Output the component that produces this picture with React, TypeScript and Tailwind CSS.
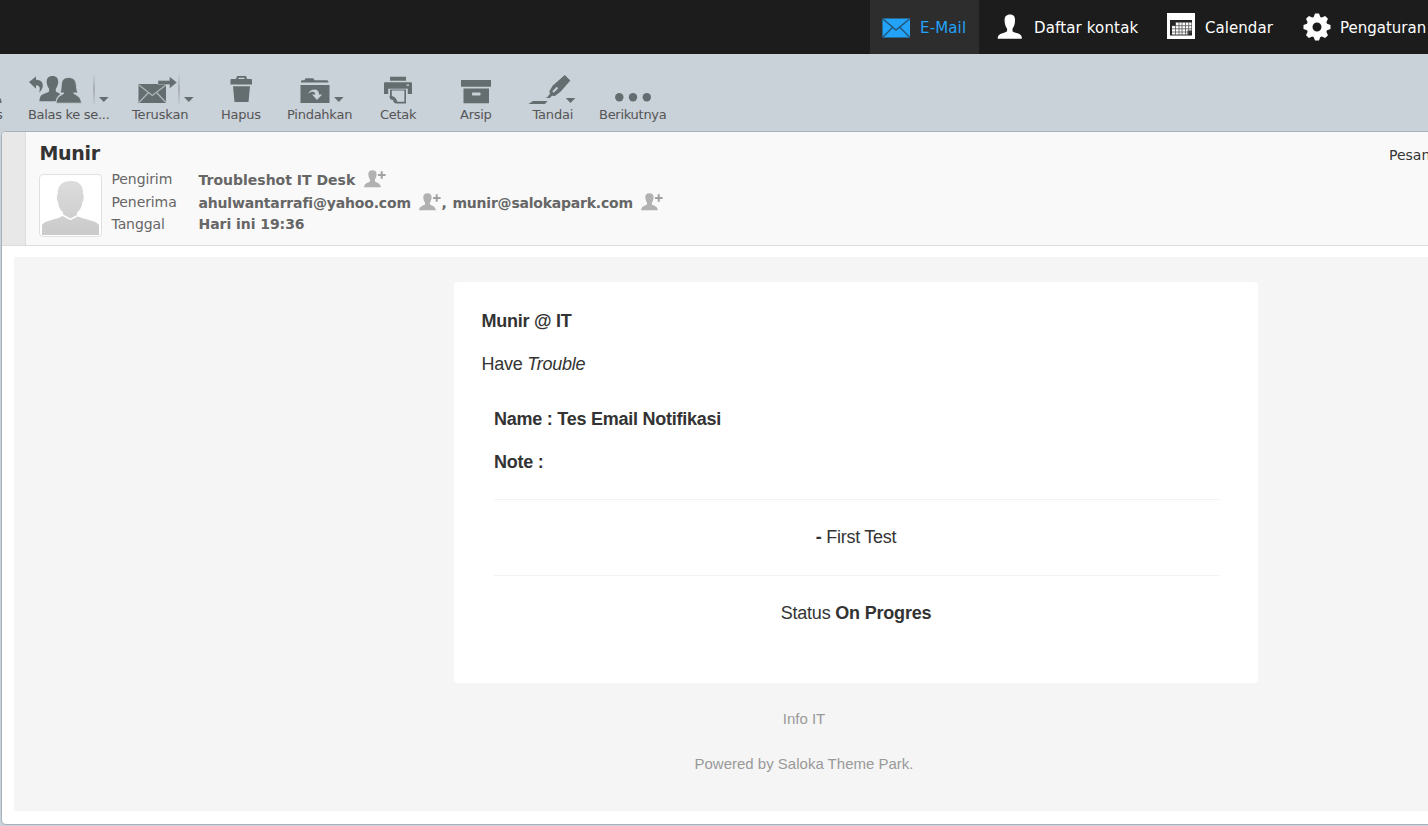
import React from 'react';

const Caret = ({ x, y }: { x: number; y: number }) => <path d={`M${x} ${y}h9.6l-4.8 5z`} />;

const Sep = ({ x }: { x: number }) => (
  <g>
    <rect x={x} y="73" width="2" height="32" fill="url(#fade)" />
  </g>
);

const Tool = ({ cls, x, w, label, text = 'tracking-[-0.25px]', children }: { cls: string; x: number; w: number; label: string; text?: string; children?: React.ReactNode }) => (
  <button className={`flex shrink-0 flex-col items-start pt-[12px] ${cls}`}>
    <svg width={w} height="40" viewBox={`${x} 66 ${w} 40`} fill="#646d6f" className="block overflow-visible">
      {children}
    </svg>
    <span className={`mt-px whitespace-nowrap text-[13px] leading-[16px] ${text}`}>{label}</span>
  </button>
);

const AddContact = () => (
  <svg width="22" height="18" viewBox="0 0 22 18" className="mt-px block shrink-0" fill="#b1b1b1">
    <path d="M8.500.3c3 0 4.300 1.800 4.100 4.300-.2 2.600-1.200 4.300-1.700 5v1.800c1 1 5.800 1.400 6 5.900H0c.2-4.500 5-4.900 6-5.900V9.600c-.6-.8-1.500-2.400-1.700-5C4.100 2.100 5.500.3 8.500.3z" />
    <path d="M14 4h2.700V1.200h2V4h2.900v2h-2.900v2.800h-2V6H14z" fill="#a0a0a0" />
  </svg>
);

const toolDark = '#646d6f';

export default function App() {
  return (
    <div className="flex h-[826px] w-[1428px] flex-col overflow-hidden bg-[#c9d1d9] [font-family:'DejaVu_Sans',Verdana,sans-serif]">
      <nav className="flex h-[54px] shrink-0 bg-[#1c1c1c] pl-[870px] text-[15px] text-white">
        <div className="flex w-[109px] shrink-0 items-center bg-[#2d2d2d] pl-[12px] text-[#22a3f8]">
          <svg width="28" height="20" viewBox="0 0 28 20" className="mr-[10px] mt-[2px] block">
            <rect x=".5" y=".5" width="27.500" height="19" fill="#22a3f8" />
            <path d="M1 1l13 11L27.500 1M1 19l9.500-9.500M27.500 19L18 9.500" fill="none" stroke="#235377" strokeWidth="1.400" />
          </svg>
          <span className="whitespace-nowrap pt-[2px] tracking-[0.150px]">E-Mail</span>
        </div>
        <div className="flex w-[171px] shrink-0 items-center pl-[18px]">
          <svg width="26" height="26" viewBox="0 0 26 26" className="mr-[11px] block" fill="#fff">
            <path d="M13 .5c4 0 5.200 2.500 5 6.200-.1 4-1.200 6.200-2.500 8v2.500c2 1.800 9 2 9.300 6v1.600H.8v-1.600c.3-4 7.300-4.200 9.300-6v-2.500c-1.300-1.800-2.400-4-2.500-8C7.400 3 9 .5 13 .5z" />
          </svg>
          <span className="whitespace-nowrap pt-[2px] tracking-[0.150px]">Daftar kontak</span>
        </div>
        <div className="flex w-[152px] shrink-0 items-center pl-[17px]">
          <svg width="28" height="26" viewBox="0 0 28 26" className="-mt-[2px] mr-[10px] block">
            <path d="M0 0h28v26H0z" fill="#fff" />
            <path d="M3 7h22v15.500H3z" fill="#252525" />
            <path d="M9 9.500h15.500v8h-4V21.500H5v-8.500h4z" fill="#fff" />
            <path d="M5 12.700h20M5 15.800h20M5 19h20M8.500 9v13M12 9v13M15 9v13M18.500 9v13M21.700 9v13" stroke="#555" strokeWidth=".8" />
          </svg>
          <span className="whitespace-nowrap pt-[2px] tracking-[0.050px]">Calendar</span>
        </div>
        <div className="flex shrink-0 items-center">
          <svg width="30" height="30" viewBox="0 0 30 30" className="-mt-px mr-[8px] block" fill="#fff">
            <circle cx="15" cy="15" r="7.500" fill="none" stroke="#fff" strokeWidth="6" />
            {[0, 45, 90, 135, 180, 225, 270, 315].map((a) => (
              <path key={a} d="M11.500 5.500l1.500-4h4l1.500 4z" transform={`rotate(${a} 15 15)`} />
            ))}
          </svg>
          <span className="whitespace-nowrap pt-[2px]">Pengaturan</span>
        </div>
      </nav>

      <div className="flex h-[77px] shrink-0 text-[#555]">
        <Tool cls="w-[28px]" x={0} w={28} label="s" text="-ml-[4px]">
          <defs>
            <linearGradient id="fade" x1="0" x2="0" y1="0" y2="1">
              <stop offset="0" stopColor="#9b9ea1" stopOpacity="0" />
              <stop offset=".5" stopColor="#9b9ea1" stopOpacity="0.700" />
              <stop offset="1" stopColor="#9b9ea1" stopOpacity="0.100" />
            </linearGradient>
          </defs>
          <path d="M0 98q1.500 1 1.500 5H0z" />
        </Tool>
        <Tool cls="w-[104px]" x={28} w={104} label="Balas ke se..." text="tracking-[-0.300px]">
          <path d="M29 82l7-5.500v3.200c6 0 8 4.300 6.200 8.500-.5 1.500-1.500 3-3 4.500 1.500-5.500.3-7.200-3.200-7.500v3.500z" />
          <path d="M52.500 76c4 0 6 2.300 5.700 6.300-.2 3-1.200 5-2.400 6.500v2.700c1.500 1 3.500 1.700 4.500 2.700-2 1.400-4 3-4.500 7H39.500c0-5.500 2.500-7 6-8 1.500-.5 2.800-1 3.600-1.700v-2.700c-1.200-1.500-2.200-3.500-2.400-6.500-.3-4 1.800-6.300 5.800-6.300z" />
          <path d="M68.500 77.500c6.500 0 7.600 4 8 9 .2 3 .8 5 1.500 6.500h-4.500c2 2.500 7.500 2.500 8 10.200H56c.5-7.700 6-7.700 8-10.200h-4c.8-1.500 1-3.500 1.200-6.500.3-5 1-9 7.300-9z" stroke="#c9d1d9" strokeWidth=".9" />
          <Sep x={93} /><Caret x={99} y={97} />
        </Tool>
        <Tool cls="w-[89px]" x={132} w={89} label="Teruskan" text="tracking-[-0.150px]">
          <path d="M138.500 84h27.500v19h-27.500z" />
          <path d="M139 85l13.300 10.500L166 85M139 102.500l9.500-10M166 102.500l-9.500-10" fill="none" stroke="#aeb6bb" strokeWidth="1.300" />
          <path d="M158 80.500h11.500V76.500l7.500 6-7.500 6v-4H158z" stroke="#c9d1d9" strokeWidth=".4" />
          <Sep x={178} /><Caret x={184} y={97} />
        </Tool>
        <Tool cls="w-[66px]" x={221} w={66} label="Hapus">
          <path fillRule="evenodd" d="M236 79l1-3h9l1 3h4q1 0 1 1v4.500h-21.500V80q0-1 1-1zm2.500 0h6v-1.300h-6zM233 86.300h17l-1.500 15.700h-14z" />
        </Tool>
        <Tool cls="w-[93px]" x={287} w={93} label="Pindahkan">
          <path d="M301 82.500v-1.500q0-.8 1.500-.8h2l1-2h7q1.500 0 2 2H327q1.300 0 1.500 2.300zM300.500 85h29v18h-29z" />
          <path d="M308 93.500c3-5 10.500-5.500 11 0v1h3.200l-5.200 5.500-5-5.500h3.200c0-3.500-3-3.500-7.200-1z" fill="#c9d1d9" />
          <Caret x={334} y={97} />
        </Tool>
        <Tool cls="w-[80px]" x={380} w={80} label="Cetak" text="tracking-[-0.300px]">
          <path d="M390 76.800h16v4h-16zM385 82.300h26q1 0 1 1V94h-28V83.300q0-1 1-1z" />
          <path d="M388.200 88.700h19.600V95h-19.600z" fill="#c9d1d9" />
          <path d="M390 89.500h16v14h-9.500c-2 0-3.200-1.500-3.500-3.500-2 0-3.500-1.300-3.500-3.300l.5-1.700z" fill={toolDark} />
          <path d="M391.800 90.500h12.600v11.300h-7c-.8-2-1.500-5-5.600-5.800z" fill="#c9d1d9" />
          <rect x="406.500" y="84.500" width="2.500" height="1.300" fill="#c9d1d9" />
        </Tool>
        <Tool cls="w-[72px]" x={460} w={72} label="Arsip">
          <path d="M461 80h30v6.700h-30zM463.500 88.500H489v14.700h-25.500z" />
          <rect x="472" y="92.500" width="8.500" height="3" rx=".7" fill="#c9d1d9" />
        </Tool>
        <Tool cls="w-[67px]" x={532} w={67} label="Tandai" text="ml-[0.500px] tracking-[-0.200px]">
          <path d="M533 101h14.500l-2.500 3h-16.500zM547 97.500l3-3.800-.7-2.500 3.500-5.700 12-10.500 5.500 5.500-9.500 11-6 4.500-2.800-.2-2.200 2.200h-5z" />
          <path d="M553 92l4.500-4.500" stroke="#c9d1d9" strokeWidth="2" />
          <Caret x={565.7} y={98} />
        </Tool>
        <Tool cls="w-[80px]" x={599} w={80} label="Berikutnya" text="tracking-[-0.280px]">
          <circle cx="619.300" cy="97.200" r="4.200" /><circle cx="633" cy="97.200" r="4.200" /><circle cx="646.800" cy="97.200" r="4.200" />
        </Tool>
      </div>

      <main className="ml-[1px] flex h-[694px] w-[1440px] shrink-0 flex-col overflow-hidden rounded-[5px] border border-[#a8b2bb] bg-white">
        <header className="flex h-[114px] shrink-0 border-b border-[#ddd] bg-[#f9f9f9]">
          <div className="w-[24px] shrink-0 border-r border-[#ddd] bg-[#e8e8e8]" />
          <div className="flex w-[1363px] shrink-0 flex-col pl-[13px] pt-[8px]">
            <h1 className="pl-[0.500px] text-[19px] font-bold leading-[26px] tracking-[-0.300px] text-[#333]">Munir</h1>
            <div className="flex pt-[8px]">
              <div className="h-[63px] w-[63px] rounded-[4px] border border-[#e0e0e0] bg-white p-[2px]">
                <svg width="57" height="58" viewBox="0 0 57 58">
                  <defs><linearGradient id="person" x1="0" x2="0" y1="0" y2="1"><stop stopColor="#dcdcdc" /><stop offset="1" stopColor="#cacaca" /></linearGradient></defs>
                  <path d="M29 4c8 0 12.500 4 12 13 1.500 1 .8 6-.5 8-.7 5-2.500 8-5.500 10.500v3.200c5 3.800 20 4.500 22 9.300v10H0V48c2-4.800 16-5.500 21-9.300v-3.200c-2.500-2.500-4.500-5.500-5-10.500-1.300-2-1.500-7-.2-8C15.500 8 20.500 4 29 4z" fill="url(#person)" />
                  <path d="M19.500 37.500l9 5 9-5" fill="none" stroke="#fff" strokeWidth="1.500" />
                </svg>
              </div>
              <div className="ml-[9.500px] flex w-[87px] flex-col text-[14px] tracking-[-0.100px] text-[#666]">
                <span className="-mt-[6px] h-[23px] leading-[23px]">Pengirim</span>
                <span className="h-[22px] leading-[23px]">Penerima</span>
                <span className="h-[23px] leading-[23px]">Tanggal</span>
              </div>
              <div className="-mt-[5px] flex flex-col whitespace-nowrap text-[14px] font-bold text-[#666]">
                <div className="flex h-[23px] leading-[23px]"><span className="w-[165px]">Troubleshot IT Desk</span><AddContact /></div>
                <div className="flex h-[22px] leading-[23px]"><span className="w-[220px] tracking-[-0.170px]">ahulwantarrafi@yahoo.com</span><AddContact /><span className="ml-[1px] w-[11px]">,</span><span className="w-[188px] tracking-[-0.220px]">munir@salokapark.com</span><AddContact /></div>
                <div className="h-[22px] leading-[20px] tracking-[-0.050px]">Hari ini 19:36</div>
              </div>
            </div>
          </div>
          <span className="whitespace-nowrap pt-[13px] text-[14px] leading-[20px] text-[#333]">Pesan</span>
        </header>
        <section className="ml-[12px] mt-[11px] flex h-[554px] w-[1428px] shrink-0 flex-col bg-[#f5f5f5] pl-[440px] pt-[25px] [font-family:'Liberation_Sans',Arial,sans-serif]">
          <article className="flex h-[401px] w-[804px] shrink-0 flex-col rounded-[3px] bg-white px-[27.500px] pt-[28px] text-[18px] leading-[22px] tracking-[-0.250px] text-[#333]">
            <p className="font-bold">Munir @ IT</p>
            <p className="mt-[21px]">Have <i>Trouble</i></p>
            <div className="ml-[12px] mt-[33px] flex w-[725px] flex-col">
              <p className="pl-[0.500px] font-bold">Name : Tes Email Notifikasi</p>
              <p className="mt-[21px] pl-[0.500px] font-bold">Note :</p>
              <div className="mt-[26px] h-[77px] border-y border-[#f2f2f2] pt-[26px] text-center"><b>-</b> First Test</div>
              <p className="mt-[26px] text-center tracking-[-0.200px]">Status <b>On Progres</b></p>
            </div>
          </article>
          <footer className="flex w-[700px] flex-col items-center pt-[25px] text-[15px] leading-[22px] text-[#999]">
            <span>Info IT</span>
            <span className="mt-[23px]">Powered by Saloka Theme Park.</span>
          </footer>
        </section>
      </main>
    </div>
  );
}
